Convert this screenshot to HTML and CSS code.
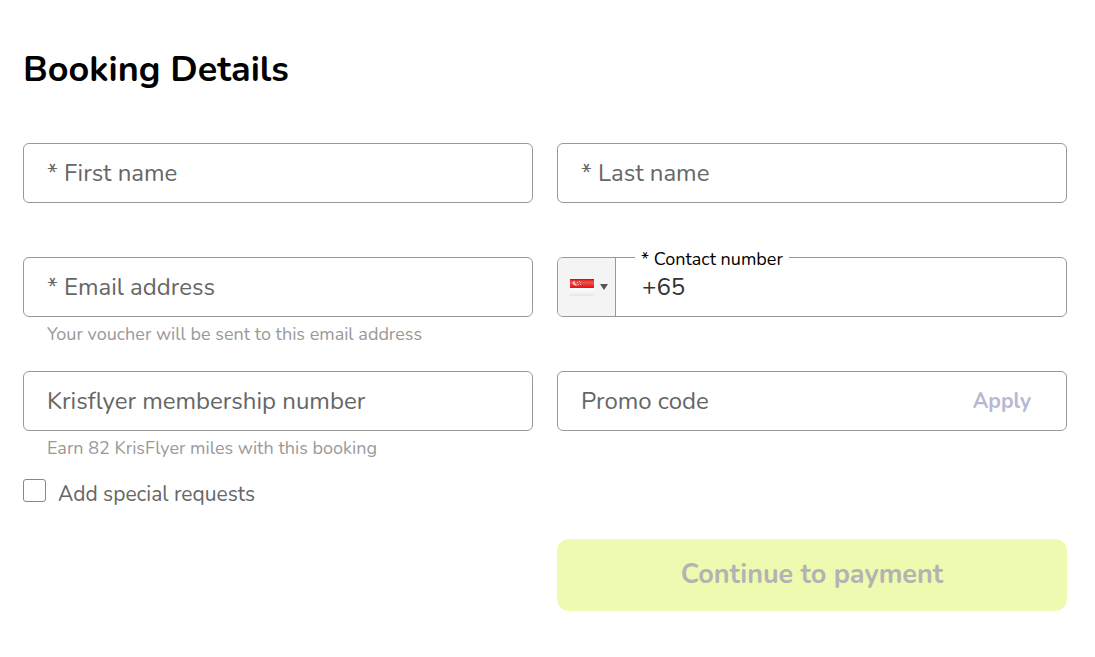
FILE: index.html
```
<!DOCTYPE html>
<html lang="en">
<head>
    <meta charset="UTF-8">
    <meta name="viewport" content="width=device-width, initial-scale=1.0">
    <title>Booking Details</title>
    <link rel="stylesheet" href="styles.css">
</head>
<body>
    <main class="booking">
        <h1>Booking Details</h1>
        <form class="booking-form">
            <div class="field">
                <div class="box">
                    <input class="box-input" type="text" id="firstName" placeholder=" " required>
                    <label class="box-label" for="firstName">* First name</label>
                </div>
            </div>
            <div class="field">
                <div class="box">
                    <input class="box-input" type="text" id="lastName" placeholder=" " required>
                    <label class="box-label" for="lastName">* Last name</label>
                </div>
            </div>
            <div class="field">
                <div class="box">
                    <input class="box-input" type="email" id="email" placeholder=" " aria-describedby="emailHint" required>
                    <label class="box-label" for="email">* Email address</label>
                </div>
                <p class="hint" id="emailHint">Your voucher will be sent to this email address</p>
            </div>
            <div class="field">
                <div class="box phone">
                    <button class="country" type="button" aria-label="Country: Singapore">
                        <svg width="25" height="17" viewBox="0 0 25 17">
                            <defs>
                                <linearGradient id="flagRed" x1="0" y1="0" x2="0" y2="1">
                                    <stop offset="0" stop-color="#e01818"/>
                                    <stop offset="0.4" stop-color="#f25050"/>
                                    <stop offset="1" stop-color="#ea0c0c"/>
                                </linearGradient>
                                <linearGradient id="flagWhite" x1="0" y1="0" x2="0" y2="1">
                                    <stop offset="0" stop-color="#ffffff"/>
                                    <stop offset="1" stop-color="#f0eeee"/>
                                </linearGradient>
                            </defs>
                            <rect width="24" height="9" fill="url(#flagRed)"/>
                            <path d="M0 0h24v1H0z" fill="#d41010"/>
                            <rect y="9" width="24" height="7" fill="url(#flagWhite)"/>
                            <path d="M0 16h24" stroke="#e6dcdc"/>
                            <path d="M4 2Q1 4 4 6Q6 7 8 6Q4 5 5 2z" fill="#fbc8c8"/>
                            <path d="M7 3.500h1M10 3.500h1M8 5.500h1M10 5.500h1M9 2.500h1" stroke="#f9b0b0"/>
                        </svg>
                        <svg width="8" height="6" viewBox="0 0 8 6"><path d="M0 0h8L4 6z" fill="#555"/></svg>
                    </button>
                    <input class="phone-input" type="tel" id="phone" value="+65" required>
                    <label class="phone-label" for="phone">* Contact number</label>
                </div>
            </div>
            <div class="field">
                <div class="box">
                    <input class="box-input" type="text" id="krisflyer" placeholder=" " aria-describedby="krisHint">
                    <label class="box-label" for="krisflyer">Krisflyer membership number</label>
                </div>
                <p class="hint" id="krisHint">Earn 82 KrisFlyer miles with this booking</p>
            </div>
            <div class="field">
                <div class="box promo">
                    <input class="box-input" type="text" id="promo" placeholder=" ">
                    <label class="box-label" for="promo">Promo code</label>
                    <button class="apply" type="button" disabled>Apply</button>
                </div>
            </div>
            <div class="requests">
                <input class="check" type="checkbox" id="requests">
                <label for="requests">Add special requests</label>
            </div>
            <button class="continue" type="submit" disabled>Continue to payment</button>
        </form>
    </main>
</body>
</html>
```
FILE: styles.css
```
* {
    box-sizing: border-box;
}
body {
    margin: 0;
    background: #fff;
    color: #666;
    font-family: Nunito, Lato, sans-serif;
}
input, button {
    font-family: inherit;
}
.booking {
    padding: 46px 28px 46px 23px;
}
h1 {
    margin: 0 0 49px;
    color: #000;
    font-size: 36px;
    font-weight: 700;
    line-height: 48px;
}
.booking-form {
    display: grid;
    grid-template-columns: 1fr 1fr;
    column-gap: 24px;
}
.field {
    min-height: 114px;
}
/* input and its label share one grid cell */
.box {
    display: grid;
    grid-template-columns: 1fr;
    grid-template-rows: 58px;
    align-items: center;
    border: 1px solid #999;
    border-radius: 6px;
}
.box-input, .phone-input {
    width: 100%;
    height: 100%;
    min-width: 0;
    padding: 0 23px;
    border: none;
    border-radius: 5px;
    background: transparent;
    font-size: 24px;
    color: #333;
}
.box-input, .box-label {
    grid-area: 1 / 1;
}
.box-label {
    padding: 0 23px;
    font-size: 24px;
    line-height: 32px;
    pointer-events: none;
}
.box-input:not(:placeholder-shown) + .box-label {
    visibility: hidden;
}
.hint {
    margin: 0;
    padding: 0 24px;
    color: #999;
    font-size: 18px;
    line-height: 34px;
}
.phone {
    position: relative;
    grid-template-columns: 58px 1fr;
}
.country {
    display: flex;
    align-items: center;
    gap: 5px;
    height: 100%;
    padding: 0 0 0 12px;
    border: none;
    border-right: 1px solid #999;
    border-radius: 5px 0 0 5px;
    background: #f4f4f4;
}
.phone-input {
    padding: 0 26px;
}
/* label sits on top of the border line */
.phone-label {
    position: absolute;
    top: -10px;
    left: 77px;
    padding: 0 6px;
    background: #fff;
    color: #000;
    font-size: 18px;
    line-height: 22px;
}
.promo {
    grid-template-columns: 1fr auto;
}
.apply {
    margin-right: 23px;
    padding: 0 12px;
    border: none;
    background: none;
    color: #b8b8d4;
    font-size: 21px;
    font-weight: 700;
}
.requests {
    grid-column: 1 / -1;
    display: flex;
    gap: 12px;
    height: 60px;
    margin-top: -6px;
    font-size: 21px;
    line-height: 30px;
}
.check {
    appearance: none;
    width: 23px;
    height: 23px;
    margin: 0;
    border: 1px solid #888;
    border-radius: 3px;
}
.check:checked {
    background: #666;
}
.continue {
    grid-column: 2;
    height: 72px;
    padding: 0 0 2px;
    border: none;
    border-radius: 12px;
    background: #eefab0;
    color: #b3b3b3;
    font-size: 27px;
    font-weight: 700;
}
@media (max-width: 700px) {
    .booking-form {
        grid-template-columns: 1fr;
    }
    .continue {
        grid-column: 1;
    }
}
```
